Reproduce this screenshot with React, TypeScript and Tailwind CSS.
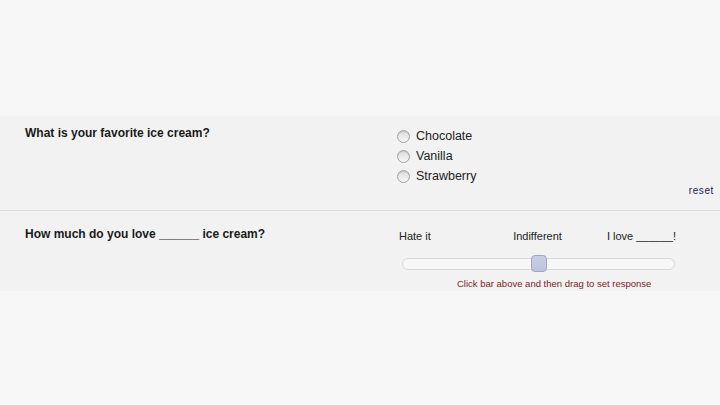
import { useState } from "react"

const font = { fontFamily: '"Liberation Sans", Arial, sans-serif' }

const flavors = ["Chocolate", "Vanilla", "Strawberry"]

function Radio({ checked }: { checked: boolean }) {
  return (
    <span className="flex h-[13px] w-[13px] items-center justify-center rounded-full border border-[#a3a3a3] bg-gradient-to-b from-[#dcdcdc] to-[#f7f7f7] shadow-[inset_0_1px_1px_rgba(0,0,0,0.12)]">
      {checked && <span className="h-[5px] w-[5px] rounded-full bg-[#333]" />}
    </span>
  )
}

export default function App() {
  const [choice, setChoice] = useState<string | null>(null)

  return (
    <div className="min-h-[405px] bg-[#f7f7f7] pt-[116px] text-[#1a1a1a]" style={font}>
      {/* question 1 */}
      <div className="flex border-b border-[#dcdcdc] bg-[#f2f2f2] pl-[25px] pr-[6px] pt-[10px] pb-[14px]">
        <div className="w-[372px] text-[12px] font-bold leading-[14px]">What is your favorite ice cream?</div>
        <div className="flex flex-1 flex-col">
          {flavors.map((f) => (
            <label
              key={f}
              className="flex h-[20px] cursor-pointer items-center gap-[6px] text-[12.5px] text-[#222]"
              onClick={() => setChoice(f)}
            >
              <Radio checked={choice === f} />
              {f}
            </label>
          ))}
          <div className="text-right text-[10px] leading-[10px] tracking-[0.6px] text-[#1c1c5c]">
            <span className="cursor-pointer" onClick={() => setChoice(null)}>
              reset
            </span>
          </div>
        </div>
      </div>

      {/* question 2 */}
      <div className="flex bg-[#f2f2f2] pl-[25px] pt-[16px] pb-[1px]">
        <div className="w-[372px] text-[12px] font-bold leading-[14px]">How much do you love ______ ice cream?</div>
        <div className="flex flex-col pl-[2px] pt-[2px]">
          <div className="grid w-[277px] grid-cols-3 text-[11px] leading-[14px] text-[#222]">
            <span>Hate it</span>
            <span className="text-center">Indifferent</span>
            <span className="text-right">I love ______!</span>
          </div>
          <div className="relative ml-[3px] mt-[15px] h-[12px] w-[273px] rounded-[6px] border border-[#d8d8d8] bg-[#f7f7f7]">
            <span className="absolute left-[128px] top-[-4px] h-[17px] w-[16px] rounded-[4px] border border-[#9ba6c9] bg-gradient-to-b from-[#c9d0e4] to-[#bcc4dc]" />
          </div>
          <div className="ml-[58px] mt-[8px] text-[9.5px] leading-[12px] text-[#7a1c1c]">
            Click bar above and then drag to set response
          </div>
        </div>
      </div>
    </div>
  )
}
